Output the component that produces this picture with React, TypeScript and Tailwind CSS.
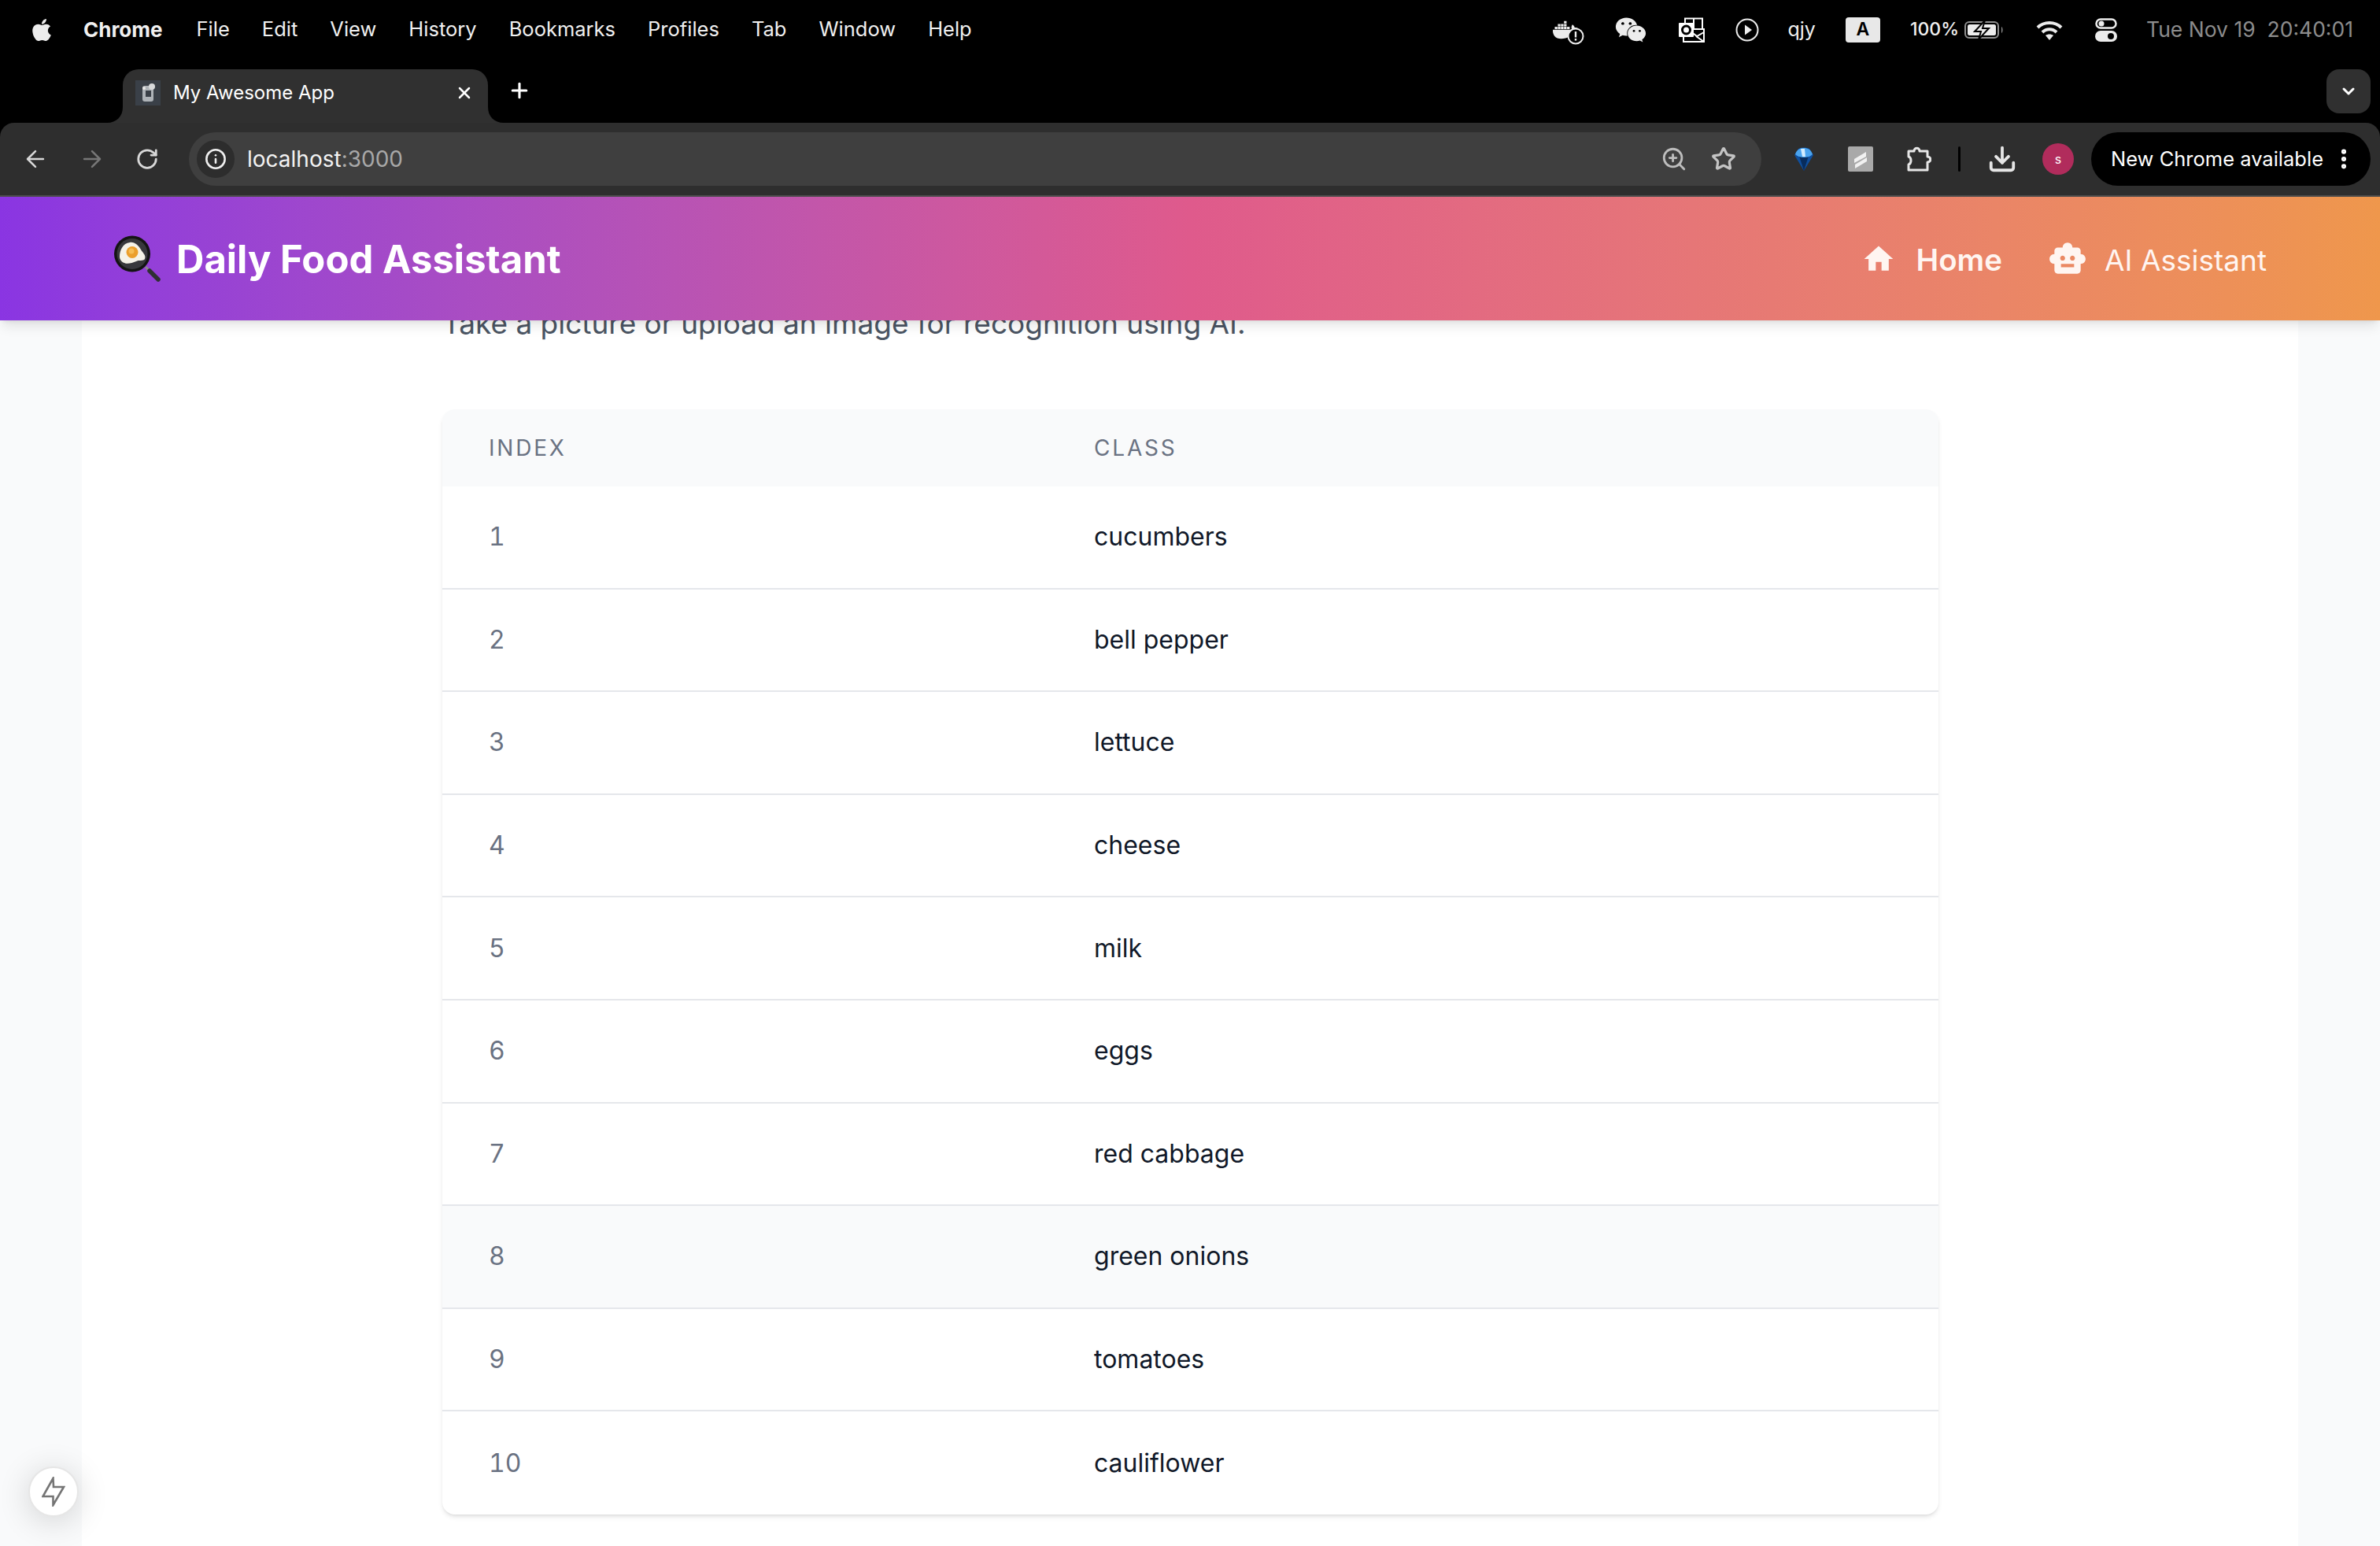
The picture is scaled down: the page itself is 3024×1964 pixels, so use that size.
import { ArrowLeft, ArrowRight, RotateCw, Info, ZoomIn, Star, Download, EllipsisVertical, X, Plus, ChevronDown } from "lucide-react";
import { FaApple, FaWeixin, FaDocker } from "react-icons/fa";
import { MdHome, MdSmartToy } from "react-icons/md";

const menus = ["File", "Edit", "View", "History", "Bookmarks", "Profiles", "Tab", "Window", "Help"];
const rows = ["cucumbers", "bell pepper", "lettuce", "cheese", "milk", "eggs", "red cabbage", "green onions", "tomatoes", "cauliflower"];

function Pan() {
  return (
    <svg width="62" height="60" viewBox="0 0 62 60" className="shrink-0">
      <path d="M42 40 L47 45" stroke="#8a8a8a" strokeWidth="3" />
      <path d="M47 45 L58 56" stroke="#2f3033" strokeWidth="5.500" strokeLinecap="round" />
      <circle cx="25" cy="23.500" r="23" fill="#141414" />
      <circle cx="25" cy="23.500" r="19.500" fill="#38383c" />
      <path d="M9 27c0-8 4-17 13-18 6-1 11 4 14 9 2 4 7 7 5 12-2 3-8 1-11 3-5 2-11 4-15 2-4-1-6-5-6-8z" fill="#f5f2e8" />
      <circle cx="25" cy="21.500" r="7.500" fill="#eb9f2c" />
      <circle cx="24" cy="20" r="3.500" fill="#f6bd55" />
    </svg>
  );
}

function Favicon() {
  return (
    <svg width="32" height="32" viewBox="0 0 32 32" className="shrink-0">
      <rect width="32" height="32" fill="#3a4048" />
      <rect x="9" y="7" width="14" height="20" rx="3" fill="#aeb3b8" />
      <circle cx="21" cy="8" r="4" fill="#d8dadc" />
      <rect x="13" y="13" width="7" height="8" fill="#3a4048" />
      <circle cx="11" cy="10" r="2" fill="#e8e8e8" />
    </svg>
  );
}

function Outlook() {
  return (
    <svg width="34" height="32" viewBox="0 0 34 32" fill="none">
      <rect x="8" y="1.500" width="22" height="16" stroke="white" strokeWidth="2" />
      <path d="M19 1.500V17" stroke="white" strokeWidth="2" />
      <rect x="6" y="15" width="26" height="16" fill="black" stroke="white" strokeWidth="2" />
      <path d="M14 17l9 7 9-5M22 24l10 7" stroke="white" strokeWidth="2" />
      <rect x="0" y="7" width="19" height="18" rx="1" fill="white" />
      <circle cx="9.500" cy="16" r="5" stroke="black" strokeWidth="3" />
    </svg>
  );
}

function Battery() {
  return (
    <svg width="50" height="24" viewBox="0 0 50 24" fill="none">
      <rect x="1" y="2" width="42" height="20" rx="5" stroke="#8f8f8f" strokeWidth="2" />
      <rect x="4" y="5" width="36" height="14" rx="2.500" fill="#ececec" />
      <path d="M47 8c2 .7 2 7.300 0 8z" fill="#8f8f8f" />
      <path d="M26 0 13 14h8l-3 10 13-14h-8z" fill="#ececec" stroke="black" strokeWidth="2" />
    </svg>
  );
}

function Wifi() {
  return (
    <svg width="36" height="28" viewBox="0 0 36 28" fill="none" stroke="#ececec" strokeWidth="4">
      <path d="M3 11C11 3 25 3 33 11" />
      <path d="M9 17C14 12 22 12 27 17" />
      <path d="M18 27l-5-6c3-2 7-2 10 0z" fill="#ececec" stroke="none" />
    </svg>
  );
}

function Control() {
  return (
    <svg width="28" height="30" viewBox="0 0 28 30">
      <rect x="1.500" y="1.500" width="25" height="11" rx="5.500" fill="none" stroke="#ececec" strokeWidth="2.500" />
      <circle cx="8" cy="7" r="3.500" fill="#ececec" />
      <rect y="16" width="28" height="14" rx="7" fill="#ececec" />
      <circle cx="20" cy="23" r="4" fill="black" />
    </svg>
  );
}

function Docker() {
  return (
    <div className="relative w-[40px] h-[32px]">
      <FaDocker size={32} color="#ececec" />
      <svg width="22" height="22" viewBox="0 0 22 22" className="absolute right-0 bottom-[-3px]">
        <circle cx="11" cy="11" r="9.500" fill="black" stroke="#ececec" strokeWidth="2" />
        <rect x="9.800" y="5" width="2.400" height="7.500" fill="#ececec" />
        <rect x="9.800" y="14" width="2.400" height="2.600" fill="#ececec" />
      </svg>
    </div>
  );
}

function Play() {
  return (
    <svg width="30" height="30" viewBox="0 0 30 30" fill="none">
      <circle cx="15" cy="15" r="13.500" stroke="#ececec" strokeWidth="2" />
      <path d="M12 8.500v13l9-6.500z" fill="#ececec" />
    </svg>
  );
}

function Gem() {
  return (
    <svg width="28" height="30" viewBox="0 0 28 30">
      <path d="M14 30 2 10 7 2c4-2 10-2 14 0l5 8z" fill="#0f4f9e" />
      <path d="M14 30 8 11h12z" fill="#082c5c" />
      <path d="M3 9C5 3 9 1 14 1s9 2 11 8c-3 3-7 4-11 4S6 12 3 9z" fill="#4aa3ee" />
      <path d="M10 2h5l1 10h-4z" fill="#d4ecfd" />
    </svg>
  );
}

function Slash() {
  return (
    <svg width="32" height="32" viewBox="0 0 32 32">
      <rect width="32" height="32" rx="2" fill="#a9a9a9" />
      <path d="M8 16 23 7v6L8 21zM9 23l15-9v5L9 28z" fill="#f1f1f1" />
    </svg>
  );
}

function PuzzlePiece() {
  return (
    <svg width="32" height="32" viewBox="0 0 32 32" fill="none" stroke="#e6e6e6" strokeWidth="3" strokeLinejoin="round">
      <path d="M3 6h7c0-5 7-5 7 0h10v7c5 0 5 7 0 7v10H3v-7c4-1 4-9 0-10z" />
    </svg>
  );
}

function Bolt() {
  return (
    <svg width="30" height="38" viewBox="0 0 30 38" fill="none" stroke="#757575" strokeWidth="2.600" strokeLinejoin="miter">
      <path d="M14.500 2 1.500 25H14.500V36L28 13H15z" />
    </svg>
  );
}

export default function App() {
  return (
    <div className="h-[1964px] overflow-hidden flex flex-col bg-black font-['Inter','Liberation_Sans',sans-serif]">
      <div className="h-[75px] shrink-0 flex items-center justify-between pl-[37px] pr-[34px] text-[25.500px] text-[#f0f0f0]">
        <div className="flex items-center">
          <FaApple size={32} color="#ececec" className="mr-[37px]" />
          <span className="font-bold text-[26px] mr-[43px]">Chrome</span>
          <div className="flex items-center gap-[41px]">
            {menus.map((m) => (
              <span key={m}>{m}</span>
            ))}
          </div>
        </div>
        <div className="flex items-center">
          <Docker />
          <FaWeixin size={40} color="#ececec" className="ml-[39px]" />
          <div className="ml-[41px] flex"><Outlook /></div>
          <div className="ml-[38px] flex"><Play /></div>
          <span className="ml-[36px] text-[25px]">qjy</span>
          <div className="ml-[38px] w-[44px] h-[32px] rounded-[4px] bg-[#e8e8e8] text-black font-semibold text-[23px] flex items-center justify-center">A</div>
          <span className="ml-[38px] text-[23px] font-medium">100%</span>
          <div className="ml-[7px] flex"><Battery /></div>
          <div className="ml-[40px] flex"><Wifi /></div>
          <div className="ml-[40px] flex"><Control /></div>
          <span className="ml-[37px] text-[26.500px] text-[#8c8c8c] whitespace-pre">Tue Nov 19  20:40:01</span>
        </div>
      </div>

      <div className="h-[81px] shrink-0 flex items-end pl-[156px] pr-[12px]">
        <div className="relative w-[464px] h-[68px] rounded-t-[20px] bg-[#303030] flex items-center pl-[16px] pr-[18px] pb-[8px] text-white text-[24px]">
          <svg width="20" height="20" viewBox="0 0 20 20" className="absolute left-[-20px] bottom-0">
            <path d="M20 0v20H0C12 20 20 12 20 0z" fill="#303030" />
          </svg>
          <svg width="20" height="20" viewBox="0 0 20 20" className="absolute right-[-20px] bottom-0">
            <path d="M0 0v20h20C8 20 0 12 0 0z" fill="#303030" />
          </svg>
          <Favicon />
          <span className="ml-[16px] flex-1">My Awesome App</span>
          <X size={24} strokeWidth={2.500} />
        </div>
        <Plus size={30} strokeWidth={2.500} color="white" className="ml-[25px] mb-[26px]" />
        <div className="ml-auto mb-[12px] w-[56px] h-[56px] rounded-[16px] bg-[#303030] flex items-center justify-center">
          <ChevronDown size={24} strokeWidth={3} color="white" />
        </div>
      </div>

      <div className="h-[94px] shrink-0 bg-[#2e2e2e] rounded-t-[18px] border-b-2 border-[#4c4c4c] flex items-center pl-[28px] pr-[12px]">
        <ArrowLeft size={34} color="#d8d8d8" strokeWidth={1.800} />
        <ArrowRight size={34} color="#777777" strokeWidth={1.800} className="ml-[38px]" />
        <RotateCw size={30} color="#d8d8d8" strokeWidth={2.200} className="ml-[38px]" />
        <div className="ml-[38px] w-[1998px] h-[68px] rounded-full bg-[#3f3f3f] flex items-center pl-[10px] pr-[32px]">
          <div className="w-[48px] h-[48px] rounded-full bg-[#2d2d2d] flex items-center justify-center">
            <Info size={28} color="#efefef" strokeWidth={2.200} />
          </div>
          <span className="ml-[16px] text-[28px] text-[#f2f2f2]">
            localhost<span className="text-[#a8a8a8]">:3000</span>
          </span>
          <ZoomIn size={34} color="#bdbdbd" strokeWidth={2} className="ml-auto" />
          <Star size={32} color="#c4c4c4" strokeWidth={2.400} className="ml-[30px]" />
        </div>
        <div className="ml-[40px] flex"><Gem /></div>
        <div className="ml-[42px] flex"><Slash /></div>
        <div className="ml-[42px] flex"><PuzzlePiece /></div>
        <div className="ml-[34px] w-[3px] h-[32px] rounded bg-black" />
        <Download size={38} color="#e6e6e6" strokeWidth={2.400} className="ml-[34px]" />
        <div className="ml-[32px] w-[40px] h-[40px] rounded-full bg-[#b12c5c] text-white text-[16px] flex items-center justify-center">s</div>
        <div className="ml-[22px] w-[355px] h-[68px] rounded-full bg-black flex items-center pl-[25px] text-white text-[25.500px]">
          <span className="whitespace-nowrap">New Chrome available</span>
          <EllipsisVertical size={32} color="white" strokeWidth={2.600} className="ml-[10px]" />
        </div>
      </div>

      <header className="relative z-10 h-[157px] shrink-0 bg-gradient-to-r from-[#8a35e2] via-[#df5a8c] to-[#ef974c] shadow-lg flex items-center justify-between pl-[143px] pr-[144px] text-white">
        <div className="flex items-center">
          <Pan />
          <span className="ml-[19px] pt-[2px] text-[49px] font-bold">Daily Food Assistant</span>
        </div>
        <nav className="flex items-center text-[#fff5f1]">
          <MdHome size={44} />
          <span className="ml-[25px] pt-[4px] text-[38.500px] font-semibold">Home</span>
          <MdSmartToy size={50} className="ml-[58px]" />
          <span className="ml-[22px] pt-[4px] text-[37px]">AI Assistant</span>
        </nav>
      </header>

      <div className="relative flex-1 overflow-hidden bg-gray-50 px-[104px]">
        <main className="h-full bg-white pl-[458px] pr-[457px] flex flex-col">
          <p className="mt-[-26px] mb-[79px] text-[37px] leading-[60px] text-[#4b5563] whitespace-nowrap">
            Take a picture or upload an image for recognition using AI.
          </p>
          <div className="rounded-2xl bg-white shadow-md overflow-hidden">
            <div className="h-[98px] bg-gray-50 flex items-center text-[28px] tracking-[2.800px] text-gray-500 uppercase">
              <span className="w-[828px] pl-[59px]">Index</span>
              <span>Class</span>
            </div>
            {rows.map((r, i) => (
              <div
                key={r}
                className={`h-[130.600px] flex items-center text-[32px] border-gray-200 ${i < 9 ? "border-b-2" : ""} ${i === 7 ? "bg-gray-50" : ""}`}
              >
                <span className="w-[828px] pl-[59px] text-gray-500 tabular-nums">{i + 1}</span>
                <span className="text-gray-900">{r}</span>
              </div>
            ))}
          </div>
        </main>
        <div className="absolute left-[36px] bottom-[37px] w-[64px] h-[64px] rounded-full bg-white border-2 border-[#e6e6e6] shadow-[0_6px_40px_rgba(0,0,0,0.16)] flex items-center justify-center">
          <Bolt />
        </div>
      </div>
    </div>
  );
}
